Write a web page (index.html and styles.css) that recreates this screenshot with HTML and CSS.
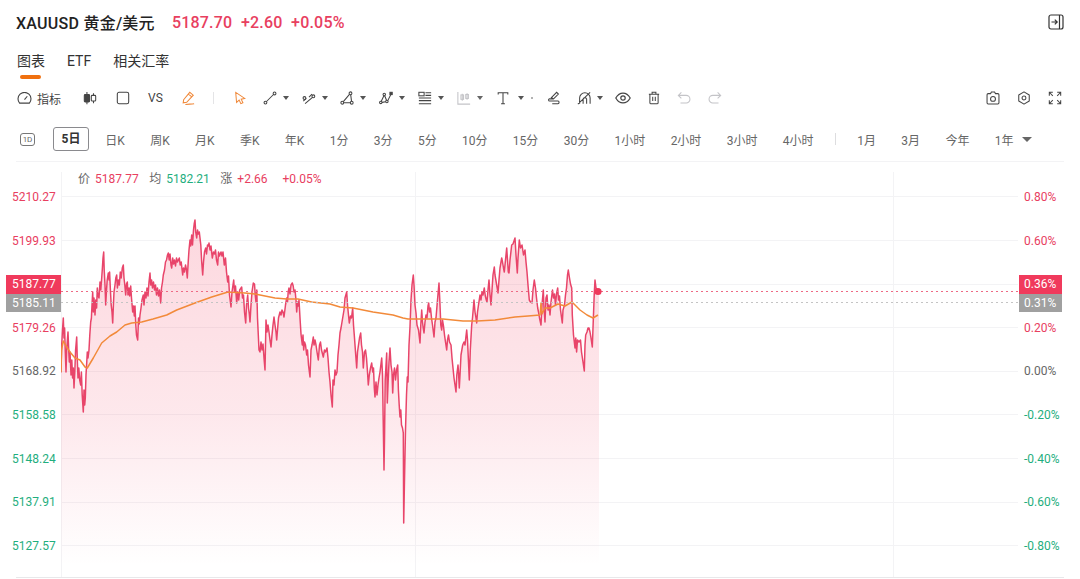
FILE: index.html
```html
<!DOCTYPE html>
<html lang="zh-CN">
<head>
<meta charset="utf-8">
<title>XAUUSD 黄金/美元</title>
<link rel="stylesheet" href="styles.css">
</head>
<body>
<header class="title-row">
  <h1 class="symbol">XAUUSD 黄金/美元</h1>
  <div class="quote">
    <span>5187.70</span><span>+2.60</span><span>+0.05%</span>
  </div>
  <svg class="collapse" viewBox="0 0 16 16"><rect x="1" y="1" width="14" height="14" rx="2"/><path d="M11.5 1V15M3.5 8H9M6.8 5.6 9.2 8 6.8 10.4"/></svg>
</header>

<nav class="tabs">
  <a class="tab tab-active">图表</a>
  <a class="tab">ETF</a>
  <a class="tab">相关汇率</a>
</nav>

<div class="toolbar">
  <div class="tool-set">
    <span class="tool tool-indicator">
      <svg class="icon icon-wide" viewBox="0 0 16 13"><path d="M2.7 12A7 7 0 1 1 13.3 12Z"/><path d="M8 8.2 11 4.6"/></svg>
      <span>指标</span>
    </span>
    <svg class="icon mg-candle" viewBox="0 0 16 16"><path d="M4.500 1V15M12 2.500V14"/><rect class="solid" x="1.500" y="4" width="6" height="8.500" rx="1"/><rect class="paper" x="9.500" y="5" width="5" height="6.500" rx="1"/></svg>
    <svg class="icon mg-square" viewBox="0 0 16 16"><rect x="1.5" y="1.5" width="13" height="13" rx="2"/></svg>
    <span class="tool-text">VS</span>
    <svg class="icon icon-orange mg-pencil" viewBox="0 0 16 16"><path d="M3 10 10 1.500 14 4.800 6.500 13 2.500 13.500ZM8.500 3.500 12 6.500M5 15.500C8.500 14.500 11.500 15.500 15 14.500"/></svg>
    <i class="divider"></i>
    <svg class="icon icon-orange mg-cursor" viewBox="0 0 14 16"><path d="M2 1.5 12.5 8.5 8.4 9.4 10.4 13.5 8 14.6 6 10.4 3 13.2Z"/></svg>
    <span class="tool tool-first">
      <svg class="icon" viewBox="0 0 16 16"><circle cx="2.8" cy="13.2" r="1.6"/><circle cx="13.2" cy="2.8" r="1.6"/><path d="M4 12 12 4"/></svg><i class="caret"></i>
    </span>
    <span class="tool">
      <svg class="icon" viewBox="0 0 16 16"><circle cx="2.800" cy="8" r="1.600"/><circle cx="13" cy="6" r="1.600"/><path d="M3.500 14.500 12 7.200M1.500 11.500 5 8.500M8 7 11.500 3.500"/></svg><i class="caret"></i>
    </span>
    <span class="tool">
      <svg class="icon" viewBox="0 0 16 16"><circle cx="2.6" cy="13.4" r="1.6"/><circle cx="13.4" cy="13.4" r="1.6"/><circle cx="12" cy="2.6" r="1.6"/><path d="M4.2 13.4H11.8M3.8 12.2 10.8 3.8M12.2 4.2 13.2 11.8"/></svg><i class="caret"></i>
    </span>
    <span class="tool">
      <svg class="icon" viewBox="0 0 16 16"><circle cx="2" cy="13" r="1.4"/><circle cx="6" cy="4" r="1.4"/><circle cx="9" cy="12" r="1.4"/><rect class="solid" x="12.5" y="1.5" width="2.6" height="2.6"/><path d="M2.6 11.8 5.6 5.4M6.5 5.4 8.6 10.6M10 11 13.4 4.2M3.4 13 7.6 12.3"/></svg><i class="caret"></i>
    </span>
    <span class="tool">
      <svg class="icon" viewBox="0 0 16 16"><rect x="1" y="1.5" width="6" height="4"/><path d="M8.5 2H15M8.5 5H15M1 8H15M1 11H15M1 14.5H15"/></svg><i class="caret"></i>
    </span>
    <span class="tool tool-muted">
      <svg class="icon icon-grey" viewBox="0 0 16 16"><path d="M1 1V15H15M6 3V11M11.5 2.5V10"/><rect x="4.5" y="4.5" width="3" height="5"/><rect x="10" y="4" width="3" height="4.5"/></svg><i class="caret"></i>
    </span>
    <span class="tool tool-type">
      <svg class="icon" viewBox="0 0 14 16"><path d="M1.5 4V2H12.5V4M7 2V14.5M4.8 14.5H9.2"/></svg><i class="caret"></i>
    </span>
    <i class="dot-sep"></i>
    <svg class="icon mg-scribble" viewBox="0 0 16 16"><path d="M5 7.5 11 1.5 13 3.5 7.5 9ZM7.5 9H2.8C1.4 9 1.4 11.4 3 11.4H12.6C14.2 11.4 14.2 14.5 12.6 14.5H6"/></svg>
    <span class="tool tool-fib">
      <svg class="icon" viewBox="0 0 16 16"><path d="M3 14.5V8A6 6 0 0 1 15 8V14.5M7 14.5V9A2.2 2.2 0 0 1 11 9V14.5M1 15 15 1.5"/></svg><i class="caret"></i>
    </span>
    <svg class="icon icon-eye" viewBox="0 0 16 12"><path d="M.8 6C4.5-.6 11.5-.6 15.2 6 11.500 12.600 4.500 12.600 .8 6Z"/><circle cx="8" cy="6" r="2.200"/></svg>
    <svg class="icon mg-trash" viewBox="0 0 14 16"><path d="M1 3.500H13M4.800 3.200V1.200H9.200V3.200M2.200 3.500V13.500C2.200 14.300 2.700 14.800 3.500 14.800H10.500C11.300 14.800 11.800 14.300 11.800 13.500V3.500M5.500 6.500V11.500M8.500 6.500V11.500"/></svg>
    <svg class="icon icon-grey mg-undo" viewBox="0 0 16 16"><path d="M5 1.500 1.500 5 5 8.500M1.500 5H10.500A4.300 4.300 0 0 1 10.500 13.600H4"/></svg>
    <svg class="icon icon-grey mg-redo" viewBox="0 0 16 16"><path d="M11 1.500 14.500 5 11 8.500M14.500 5H5.500A4.300 4.300 0 0 0 5.500 13.600H12"/></svg>
  </div>
  <div class="tool-end">
    <svg class="icon" viewBox="0 0 16 16"><path d="M5.200 3 6.200 1.200H9.800L10.800 3H13.500C14.300 3 14.800 3.500 14.800 4.300V13.500C14.800 14.300 14.300 14.800 13.500 14.800H2.500C1.700 14.800 1.200 14.300 1.200 13.500V4.300C1.200 3.500 1.700 3 2.500 3Z"/><circle cx="8" cy="9" r="2.800"/></svg>
    <svg class="icon" viewBox="0 0 16 16"><path d="M8 1 14 4.500V11.500L8 15 2 11.500V4.500Z" stroke-linejoin="round"/><circle cx="8" cy="8" r="2.200"/></svg>
    <svg class="icon" viewBox="0 0 16 16"><path d="M1.500 5.500V1.500H5.500M2 2 5.500 5.500M14.500 5.500V1.500H10.500M14 2 10.500 5.500M1.500 10.500V14.500H5.500M2 14 5.500 10.500M14.500 10.500V14.500H10.500M14 14 10.500 10.500"/></svg>
  </div>
</div>

<div class="periods">
  <span class="day-badge">1D</span>
  <span class="period period-active">5日</span>
  <span class="period">日K</span>
  <span class="period">周K</span>
  <span class="period">月K</span>
  <span class="period">季K</span>
  <span class="period">年K</span>
  <span class="period">1分</span>
  <span class="period">3分</span>
  <span class="period">5分</span>
  <span class="period">10分</span>
  <span class="period">15分</span>
  <span class="period">30分</span>
  <span class="period">1小时</span>
  <span class="period">2小时</span>
  <span class="period">3小时</span>
  <span class="period">4小时</span>
  <i class="period-sep"></i>
  <span class="period">1月</span>
  <span class="period">3月</span>
  <span class="period">今年</span>
  <span class="period">1年</span>
  <i class="period-caret"></i>
</div>

<section class="chart">
  <div class="axis axis-left">
    <span class="up">5210.27</span>
    <span class="up">5199.93</span>
    <span></span>
    <span class="up">5179.26</span>
    <span class="flat">5168.92</span>
    <span class="down">5158.58</span>
    <span class="down">5148.24</span>
    <span class="down">5137.91</span>
    <span class="down">5127.57</span>
  </div>

  <svg class="plot" viewBox="61 162 957 416" preserveAspectRatio="none">
    <defs>
      <linearGradient id="area" gradientUnits="userSpaceOnUse" x1="0" y1="225" x2="0" y2="566">
        <stop offset="0" stop-color="#f23c5e" stop-opacity=".2"/>
        <stop offset=".55" stop-color="#f23c5e" stop-opacity=".12"/>
        <stop offset="1" stop-color="#f23c5e" stop-opacity="0"/>
      </linearGradient>
      <clipPath id="line-clip"><rect x="61" y="162" width="537" height="400"/></clipPath>
      <path id="price" d="M59 577V372H61L61.700 345 62.500 330 63.300 318 64 338 64.600 328 65.300 352 66 372 66.700 350 67.400 340 68 332 68.700 350 69.300 362 70 352 71 375 71.800 360 72.600 378 73.300 368 74 388 74.800 372 75.600 350 76.700 337 77.300 360 78 378 78.800 368 79.700 380 80.700 385 81.400 372 82.200 395 83.300 412 84 390 84.700 405 85.300 398 86 375 86.600 365 87.300 352 88 358 89 350 89.800 335 90.700 322 91.400 318 92 305 92.700 292 93.300 312 94 298 95 315 95.800 300 96.600 308 97.300 288 98 296 99 298 100 282 100.800 290 101.700 278 102.400 268 103 258 103.700 252 104.200 270 105 285 105.700 305 106.400 292 107.200 280 108.300 273 109 280 109.600 272 110.400 290 111.200 305 112 312 112.700 323 113.400 305 114 292 115 285 115.800 278 116.700 275 117.400 288 118.300 280 119.300 285 120.300 272 121.200 278 122.300 268 123.300 265 124 278 124.800 285 125.700 295 126.500 284 127.300 282 128 295 129 288 129.700 296 130.700 286 131.500 298 132.700 312 133.500 306 134.300 316 135 306 135.800 325 136.500 335 137.700 340 138.500 318 139.200 324 140 315 141 308 142 300 143.300 295 144 305 145 292 146 298 147 288 148 296 149 282 150 273 150.700 285 151.600 280 152.500 288 153.500 282 154.500 290 155.500 285 156.500 295 157.500 288 158.500 296 159.500 290 160.700 303 161.500 288 162.500 282 163.300 275 164.500 270 165.500 262 166.500 260 167.500 255 168.300 253 169.200 260 170 254 171 265 171.700 268 172.700 258 173.500 264 174.500 260 175.500 266 176.500 258 177.500 262 179.300 258 180.200 265 181.200 262 182.700 275 183.500 268 184.500 272 185.500 265 186.500 270 187.300 278 188.200 262 189 250 190 240 190.700 246 191.700 235 192.500 245 193.500 230 194.200 224 195 220 195.700 232 196.700 238 197.500 230 198.400 234 199.300 232 200 238 200.800 245 201.700 262 202.700 275 203.500 262 204.500 252 205.700 248 206.500 254 207.500 245 208.500 246 209 243 210 250 211 246 212.300 258 213.500 252 214.500 254 215.500 250 216.500 260 217.700 265 218.500 252 219.500 256 221 252 222 256 223 252 224.300 265 225.500 258 226.500 272 227.700 282 228.500 276 229.500 295 231 307 232 292 233.700 280 234.500 292 235.500 286 236.700 303 237.700 292 238.700 300 239.700 290 241.700 287 242.500 298 243.500 295 244.500 312 245.700 323 246.500 305 247.700 295 248.500 308 249.300 314 250 322 251 305 252 292 253.300 283 254.500 284 255.300 296 256 302 256.800 290 257.500 318 258.300 335 259 350 260 352 261 342 262 350 263 344 264 358 265 370 265.500 345 266 320 267 332 268 325 269 332 270 340 271 347 272 335 273 325 274 317 275 325 276 332 276.700 340 277.500 330 278.500 318 280 312 281 315 282 310 283 312 284 317 285.500 305 286.700 298 287.500 302 288.200 292 289 288 290 294 291 285 292.300 283 293.200 286 294 292 295 290 296 300 296.700 312 297.500 302 298.300 306 299 300 300 318 301 334 302.300 345 303 335 303.700 350 304.500 342 305.500 345 306.700 355 307.500 350 308.500 365 310 377 311 350 312 345 313.300 337 314 345 315 340 316 345 317 352 318.300 360 319.500 345 320.500 342 321.500 350 323.300 357 324.500 350 325.500 352 327 348 328 358 329 372 330 382 331 395 332.300 407 333 380 334 385 335 370 336 375 337 372 338 355 339 345 340 333 341 328 342 322 343 316 344 310 345 298 346.700 292 347.500 305 348.500 315 349.300 323 350.500 316 351.500 318 352.700 308 353.500 325 354.500 338 355.500 352 356.700 368 357.500 352 358.500 345 359.500 338 360.700 333 361.500 345 362.500 352 363.300 368 364.500 352 365.500 350 366.500 358 367.500 372 368.300 385 369.300 375 370.500 368 371.700 363 372.700 372 373.500 368 374.300 388 375 397 376 382 377 395 378 385 379 378 380 372 381.700 358 382.500 375 383.200 420 384 470 384.500 440 385.200 380 386.700 353 387.300 403 388 385 389 362 390 348 391 365 392 372 392.700 393 393.500 375 394.500 368 395.500 380 396.500 370 397.700 365 398.400 390 399.200 405 400 417 400.800 410 401.500 425 402.500 428 403.300 433 403.500 480 403.700 523 404.500 480 405.500 430 406.500 395 407.300 377 408 382 409 345 410 327 411 300 412 285 413.300 275 414 285 415 305 416 313 417 325 418.500 330 420 343 420.800 325 421.700 310 422.500 322 423.200 328 424 333 425 322 426 315 427 318 428 306 428.700 303 429.500 312 430.500 308 431.500 318 432.500 325 434 337 435 322 436 318 437.500 300 439 283 440 305 440.800 325 441.700 330 442.500 320 443.500 326 444.500 335 445.500 342 446.700 350 447.500 340 448.500 335 449.500 342 451 345 452 358 453 368 454 378 455 385 456 392 456.800 375 458 365 458.500 372 459.300 388 460 375 461 355 462.700 345 464 342 465 345 466 336 466.700 330 467.500 340 468.500 362 469.300 380 470.300 350 471.700 325 472.500 318 474 300 475 312 476 318 476.700 323 477.500 312 478.500 305 480 295 481 300 482 292 483 295 484.300 288 485.300 296 486.300 300 487 302 488 290 489 280 490 295 491 305 492 290 493 275 494.300 267 495 275 496.700 285 497.500 290 498 293 499 280 500 268 501.700 258 502.500 262 503.500 268 504.300 272 505.500 260 506.700 248 507.500 260 508.300 272 509 273 510 260 511.700 245 513 244 515 238 516 255 517.300 273 518 258 519.300 240 520.500 248 522 245 523.500 255 525 250 526 262 527 272 528 285 529.300 300 530.500 302 532 303 533 290 534.300 280 535.500 288 536.500 298 537.700 308 538.500 312 539.500 318 541 325 542 305 543.300 290 544 308 545 322 546 298 547 295 548 310 549 305 550 315 551 302 552.500 290 553.500 298 554.500 294 555.500 305 556.500 294 557.700 288 558.500 300 559.500 296 560.500 310 562.300 323 563 310 564.500 305 565.500 295 566.500 288 567.500 275 568.300 270 569.500 278 570.500 284 571.700 288 572.300 315 573.500 335 575 348 575.800 338 576.600 352 577.500 340 579 342 580.500 340 581.500 352 583 362 584.300 371 585 345 585.700 335 587 332 588 328 589 328 590 332 591 338 592.300 347 593.300 320 594.200 295 595 280 596 288 597.300 290H599V577Z"/>
    </defs>
    <g class="grid">
      <path d="M61 196.500H1018M61 240.500H1018M61 284.500H1018M61 327.500H1018M61 371.500H1018M61 414.500H1018M61 458.500H1018M61 502.500H1018M61 545.500H1018"/>
      <path d="M61.500 172V577M415.500 172V577M893.500 172V577"/>
    </g>
    <use href="#price" class="area"/>
    <use href="#price" class="line" clip-path="url(#line-clip)"/>
    <path class="avg" d="M61 372 61.500 350 63.300 341 66.700 347 70 352 75 358 80 360 85 367 87.300 368 93.300 358 101.700 343 110 336 116.700 332 125 325 131.700 323 141.700 322 153 319 166.700 315 176.700 310 195 303 211.700 297 228 292 245 293 255 294 275 298 286.700 299 298 299 311.700 302 330 304 340 307 353 308 373 312 393 315 403 318 408 319 443 319 463 321 477 321 495 320 515 317 528 316 540 315 541 303 542 314 545 308 550 308 558 304 565 306 572 302 580 310 587 315 593 318 598 315"/>
    <path class="mark-up" d="M61 291.500H1018"/>
    <path class="mark-avg" d="M61 302.500H1018"/>
    <circle class="dot" cx="598" cy="291.500" r="3.600"/>
  </svg>

  <div class="axis axis-right">
    <span class="up">0.80%</span>
    <span class="up">0.60%</span>
    <span></span>
    <span class="up">0.20%</span>
    <span class="flat">0.00%</span>
    <span class="down">-0.20%</span>
    <span class="down">-0.40%</span>
    <span class="down">-0.60%</span>
    <span class="down">-0.80%</span>
  </div>

  <div class="legend">
    <span class="legend-key">价</span><span class="up">5187.77</span>
    <span class="legend-key gap-l">均</span><span class="down">5182.21</span>
    <span class="legend-key gap-l">涨</span><span class="up">+2.66</span>
    <span class="up gap-m">+0.05%</span>
  </div>

  <span class="tag tag-left tag-red">5187.77</span>
  <span class="tag tag-left tag-grey">5185.11</span>
  <span class="tag tag-right tag-red">0.36%</span>
  <span class="tag tag-right tag-grey">0.31%</span>
</section>
<div class="baseline"></div>
</body>
</html>
```

FILE: styles.css
```css
* { box-sizing: border-box; }

html, body {
  margin: 0;
  height: 579px;
  overflow: hidden;
  background: #fff;
  font-family: Roboto, "Noto Sans CJK SC", sans-serif;
  color: #333;
}

.title-row {
  display: flex;
  align-items: center;
  height: 44px;
  padding: 0 16px;
}

.symbol {
  margin: 0;
  font-size: 16px;
  font-weight: 500;
  letter-spacing: .25px;
  color: #222;
  white-space: nowrap;
}

.quote {
  display: flex;
  gap: 8.600px;
  margin-left: 17px;
  font-size: 16px;
  font-weight: 500;
  letter-spacing: .2px;
  color: #e8405f;
}

.collapse {
  width: 16px;
  height: 16px;
  margin-left: auto;
  fill: none;
  stroke: #333;
  stroke-width: 1.2;
}

.tabs {
  display: flex;
  gap: 22px;
  height: 35px;
  padding: 7px 0 0 17px;
  font-size: 14px;
  line-height: 20px;
  color: #333;
}

.tab { position: relative; }

.tab-active::after {
  content: "";
  position: absolute;
  left: 3px;
  right: 4px;
  top: 24px;
  height: 4px;
  border-radius: 2px;
  background: #f0700f;
}

.toolbar {
  display: flex;
  align-items: center;
  justify-content: space-between;
  height: 38px;
  padding: 0 18px 0 17px;
}

.tool-set, .tool-end, .tool {
  display: flex;
  align-items: center;
}

.tool-end { gap: 17px; }

.icon {
  flex: none;
  width: 14px;
  height: 14px;
  fill: none;
  stroke: #444;
  stroke-width: 1.2;
}

.icon .solid { fill: #444; }
.icon .paper { fill: #fff; }
.icon-wide { width: 15px; height: 12px; }
.icon-orange { stroke: #f08a3c; }
.icon-grey { stroke: #c4c4c8; }
.icon-eye { width: 16px; height: 12px; margin-left: 11px; }

.tool { width: 38.800px; gap: 6px; }
.tool-indicator { width: auto; gap: 5px; font-size: 12px; color: #444; }
.tool-first { margin-left: 17px; }
.tool-type { width: 35px; gap: 8px; }
.tool-fib { width: 27px; margin-left: 16px; gap: 6px; }
.tool-text { margin-left: 18px; font-size: 12px; color: #444; }

.caret {
  flex: none;
  width: 0;
  height: 0;
  border-left: 3px solid transparent;
  border-right: 3px solid transparent;
  border-top: 4px solid #555;
}

.tool-muted .caret { border-top-color: #666; }

.divider {
  width: 1px;
  height: 12px;
  margin-left: 18px;
  background: #e4e4e6;
}

.dot-sep {
  width: 2px;
  height: 2px;
  border-radius: 50%;
  background: #999;
}

.mg-candle { margin-left: 22px; }
.mg-square { margin-left: 19px; }
.mg-pencil { margin-left: 18px; }
.mg-cursor { margin-left: 20px; width: 12px; }
.mg-scribble { margin-left: 14px; }
.mg-trash { margin-left: 17px; width: 12px; }
.mg-undo { margin-left: 17px; }
.mg-redo { margin-left: 17px; }

.periods {
  display: flex;
  align-items: center;
  gap: 25.350px;
  height: 45px;
  margin: 0 16px;
  padding-left: 4px;
  font-size: 12px;
  color: #666;
  border-bottom: 1px solid #f3f3f5;
}

.period { white-space: nowrap; }

.day-badge {
  display: block;
  width: 15px;
  height: 13px;
  margin-right: -7.350px;
  border: 1px solid #777;
  border-radius: 3px;
  font-size: 8px;
  line-height: 11px;
  text-align: center;
  color: #666;
}

.period-active {
  width: 36px;
  height: 24px;
  margin-right: -9px;
  border: 1px solid #8a8a8e;
  border-radius: 3px;
  font-weight: 700;
  color: #333;
  line-height: 22px;
  text-align: center;
}

.period-sep {
  width: 1px;
  height: 12px;
  margin: 0 -4px;
  background: #dddddf;
}

.period-caret {
  width: 0;
  height: 0;
  margin-left: -17px;
  border-left: 5px solid transparent;
  border-right: 5px solid transparent;
  border-top: 5px solid #666;
}

.chart {
  position: relative;
  display: grid;
  grid-template-columns: 61px 957px 62px;
  height: 415px;
}

.axis {
  display: grid;
  grid-auto-rows: 43.600px;
  padding-top: 14px;
  font-size: 12px;
  line-height: 43.600px;
}

.axis-left { padding-left: 12px; }
.axis-right { padding-left: 6px; }

.up { color: #e8405f; }
.down { color: #1fae7e; }
.flat { color: #666; }

.plot {
  display: block;
  width: 957px;
  height: 416px;
}

.grid path {
  fill: none;
  stroke: #f3f3f5;
  stroke-width: 1;
}

.area { fill: url(#area); stroke: none; }

.line {
  fill: none;
  stroke: #e8456a;
  stroke-width: 1.500;
  stroke-linejoin: round;
}

.avg {
  fill: none;
  stroke: #f28a3a;
  stroke-width: 1.500;
  stroke-linejoin: round;
}

.mark-up, .mark-avg {
  fill: none;
  stroke-width: 1;
  stroke-dasharray: 2 3;
}

.mark-up { stroke: #ee6a85; }
.mark-avg { stroke: #c4c4c4; }

.dot { fill: #ee3a5c; }

.legend {
  position: absolute;
  left: 78px;
  top: 8px;
  display: flex;
  gap: 5px;
  font-size: 12px;
  line-height: 18px;
}

.legend-key { color: #666; }
.gap-l { margin-left: 5.500px; }
.gap-m { margin-left: 10px; }

.tag {
  position: absolute;
  height: 18px;
  font-size: 12px;
  line-height: 19px;
  color: #fff;
}

.tag-left { left: 6px; width: 55px; padding-left: 6px; }
.tag-right { left: 1019px; width: 43px; padding-left: 5px; }
.tag-red { top: 113px; height: 19px; background: #f03a5c; }
.tag-grey { top: 132px; background: #a0a0a0; }

.baseline {
  height: 1px;
  margin: 0 16px;
  background: #e8e8ea;
}
```
